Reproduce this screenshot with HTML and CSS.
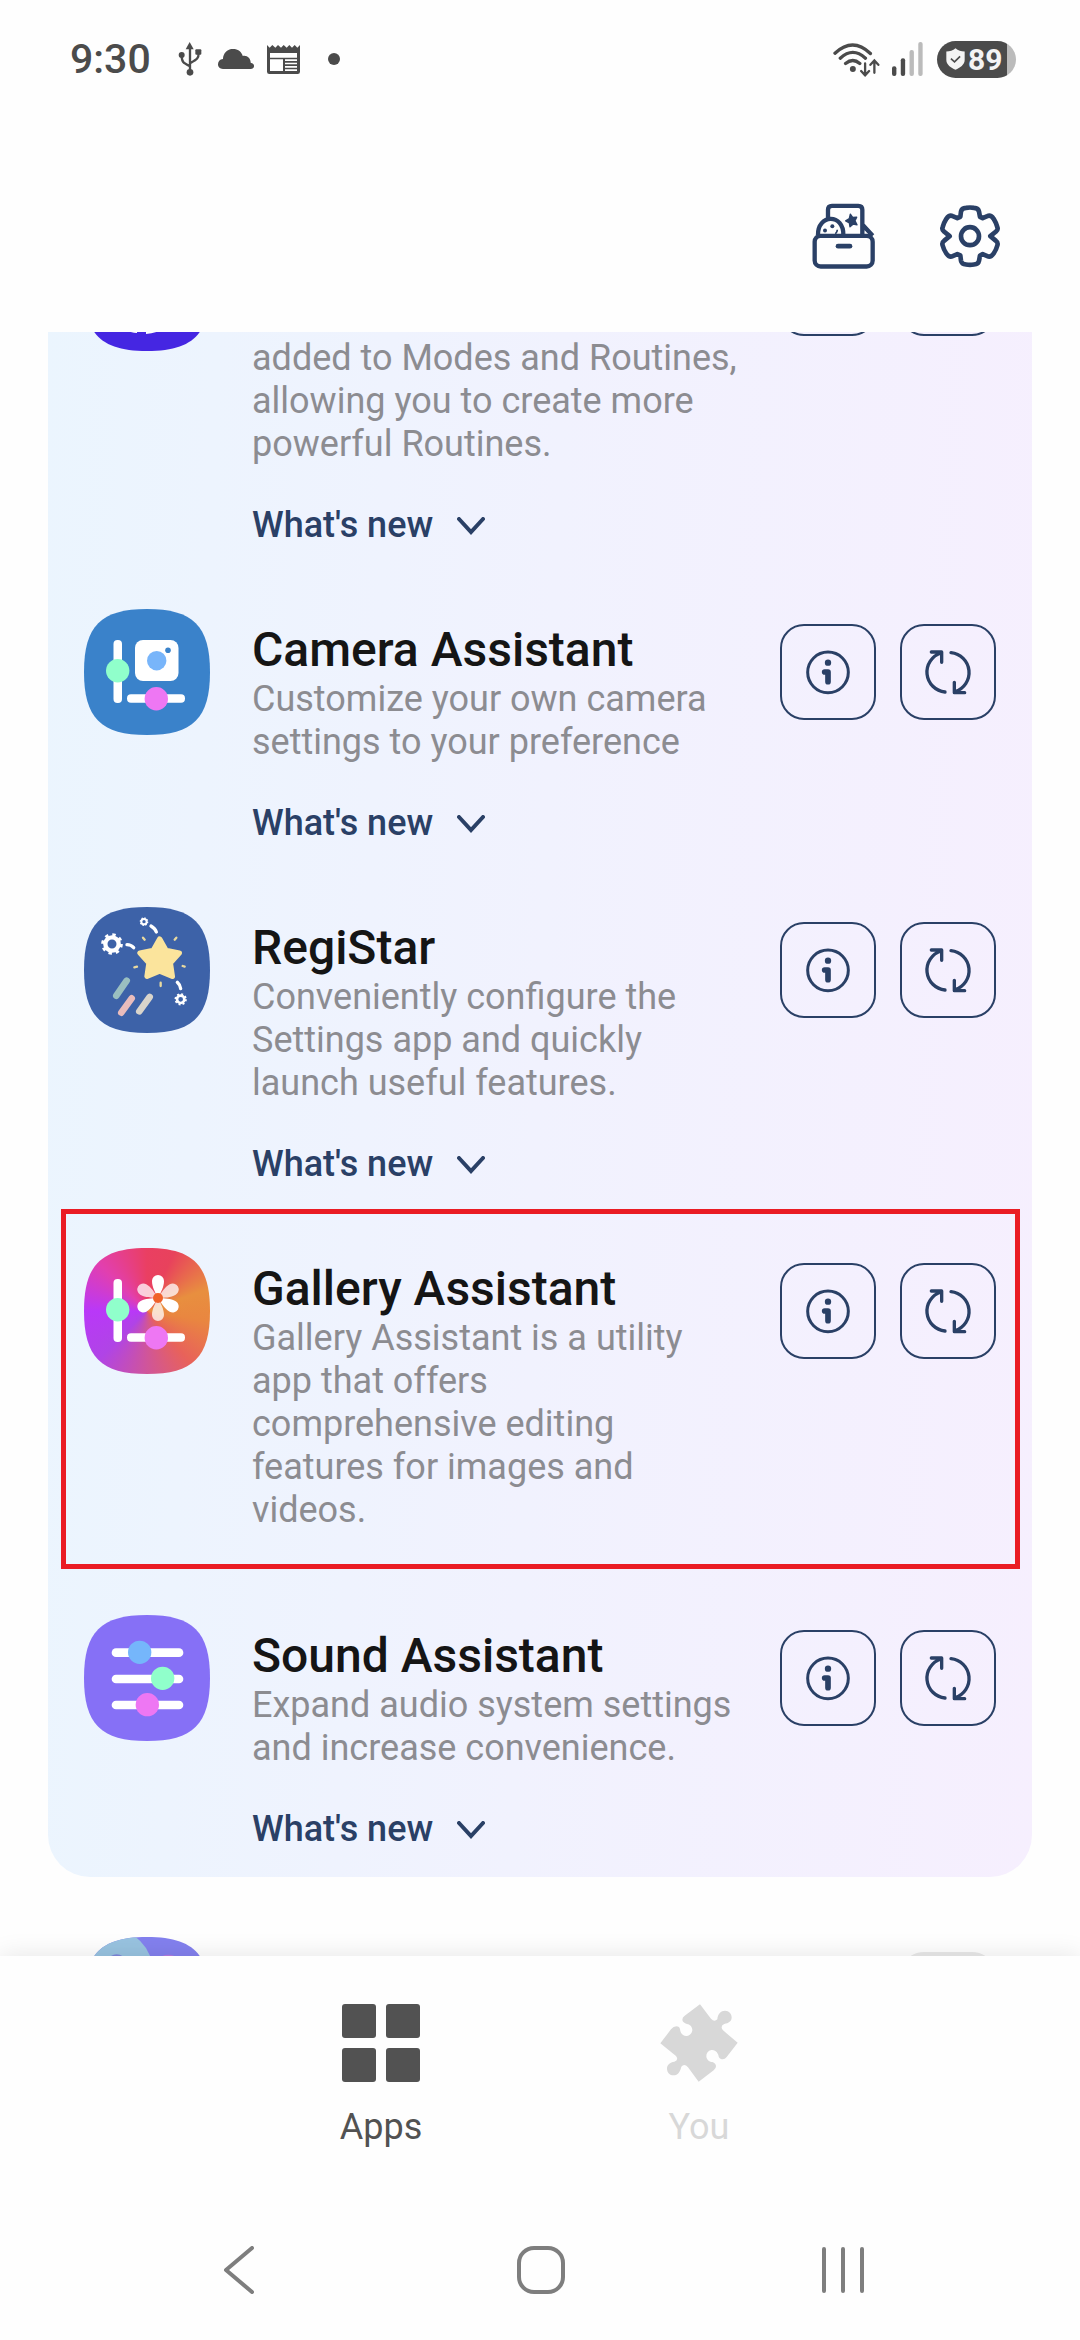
FILE: index.html
```html
<!DOCTYPE html>
<html lang="en">
<head>
<meta charset="utf-8">
<meta name="viewport" content="width=device-width, initial-scale=1">
<title>Good Lock</title>
<link rel="stylesheet" href="styles.css">
</head>
<body>
<svg class="defs" aria-hidden="true">
  <symbol id="info" viewBox="126 107 276 276">
    <circle cx="264" cy="246" r="61" fill="none" stroke="currentColor" stroke-width="9"/>
    <circle cx="264" cy="217" r="9.500" fill="currentColor"/>
    <path d="M254 245h10v29" fill="none" stroke="currentColor" stroke-width="17" stroke-linecap="round" stroke-linejoin="round"/>
  </symbol>
  <symbol id="update" viewBox="486 107 276 276">
    <g fill="none" stroke="currentColor" stroke-width="10" stroke-linecap="round" stroke-linejoin="round">
      <path d="M615 305A60 60 0 0 1 603 188M574 185h31v31"/>
      <path d="M633 187A60 60 0 0 1 645 304M674 307h-31v-31"/>
    </g>
  </symbol>
  <symbol id="chevron" viewBox="0 0 28 18">
    <path d="M2 2l12 13L26 2" fill="none" stroke="currentColor" stroke-width="4" stroke-linecap="round"/>
  </symbol>
  <symbol id="sliders" viewBox="0 0 126 126">
    <rect x="29.500" y="31" width="8.500" height="63" rx="4" fill="#fff"/>
    <circle cx="33.700" cy="61.700" r="11.700" fill="#90ffcb"/>
    <rect x="43" y="85.300" width="58" height="8.500" rx="4" fill="#fff"/>
    <circle cx="72.300" cy="89.700" r="11.700" fill="#ee77f3"/>
  </symbol>
</svg>

<header class="status">
  <div class="status-left">
    <span class="clock">9:30</span>
    <svg class="usb" viewBox="412 68 72 102" fill="#4b4b4b" aria-label="USB">
      <path d="M447 68l12 22h-24z"/><circle cx="423" cy="107" r="9"/><rect x="464" y="90" width="18" height="16" rx="3"/><circle cx="448" cy="159" r="10"/>
      <path d="M448 88v70M423 107c0 22 5 24 24 33M474 100c0 18-5 20-26 32" fill="none" stroke="#4b4b4b" stroke-width="7"/>
    </svg>
    <svg class="cloud" viewBox="534 84 109 60" fill="#4b4b4b" aria-label="Cloud">
      <path d="M549 144c-20 0-20-28 0-30 2-38 51-40 60-9 13-3 24 7 24 20 14 2 13 19 0 19z"/>
    </svg>
    <svg class="news" viewBox="681 75 99 87" aria-label="News">
      <path d="M681 75l8 8 8-8 9 8 8-8 9 8 8-8 9 8 8-8 8 8 8-8 8 8 8-8v80q0 7-7 7h-85q-7 0-7-7z" fill="#4b4b4b"/>
      <path d="M690 99h81v14h-81zM690 118h39v35h-39zM735 118h36v5h-36zM735 128h36v5h-36zM735 138h36v5h-36zM735 148h36v5h-36z" fill="#fff"/>
    </svg>
    <span class="dot"></span>
  </div>
  <div class="status-right">
    <svg class="wifi" viewBox="100 63 142 104" fill="none" stroke="#4b4b4b" stroke-linecap="round" aria-label="Wi-Fi">
      <path d="M106 96Q160 46 213 97M122 111Q160 76 198 111M138 127Q160 109 181 127" stroke-width="10"/>
      <circle cx="160" cy="144" r="9" fill="#4b4b4b" stroke="none"/>
      <path d="M197 127v36M185 150l12 13 12-13M225 155v-36M213 131l12-13 12 13" stroke-width="7"/>
    </svg>
    <svg class="signal" viewBox="275 65 92 101" aria-label="Signal">
      <rect x="275" y="137" width="13" height="29" rx="6" fill="#4b4b4b"/><rect x="301" y="113" width="13" height="53" rx="6" fill="#4b4b4b"/>
      <rect x="327" y="89" width="13" height="77" rx="6" fill="#bbb"/><rect x="353" y="65" width="13" height="101" rx="6" fill="#bbb"/>
    </svg>
    <span class="battery">
      <svg class="shield" viewBox="436 82 58 66" aria-hidden="true"><path d="M465 82c8 7 17 10 28 10v26c0 14-14 24-28 30-14-6-28-16-28-30V92c11 0 20-3 28-10z" fill="#f4f4f4"/><path d="M451 114l11 10 17-17" fill="none" stroke="#4b4b4b" stroke-width="5"/></svg>
      <span>89</span>
    </span>
  </div>
</header>

<div class="toolbar">
  <button class="tool" aria-label="My items">
    <svg viewBox="95 68 192 200" fill="none" stroke="#2a4066" stroke-width="13" stroke-linejoin="round">
      <path d="M143 112V88q0-12 12-12h79q12 0 12 12v78M113 164c-2-64 78-66 76 0M246 132l31 34"/>
      <rect x="103" y="166" width="174" height="92" rx="18"/>
      <path d="M173 197h36" stroke-linecap="round" stroke-width="14"/>
      <circle cx="134" cy="150" r="6" fill="#2a4066" stroke="none"/><circle cx="156" cy="137" r="6" fill="#2a4066" stroke="none"/>
      <path d="M165 160q6-5 6-12" stroke-width="5"/>
      <path d="M210 101l7 10 12-1-5 11 6 12-12-2-9 8-2-12-11-6 11-7z" fill="#2a4066" stroke-width="4"/>
    </svg>
  </button>
  <button class="tool" aria-label="Settings">
    <svg viewBox="472 70 192 200" fill="none" stroke="#2a4066" stroke-width="14" stroke-linejoin="round">
      <path d="M539 111L541 95Q543 85 556 84Q568 82 580 84Q593 85 595 95L598 111L606 115L620 109Q630 104 639 117Q647 130 650 142Q653 150 646 155L629 169L646 183Q653 188 650 197Q647 209 639 221Q630 234 620 229L606 223L598 227L595 243Q593 253 580 254Q568 256 556 254Q543 253 541 243L539 227L530 223L516 229Q506 234 497 221Q489 209 486 197Q483 188 490 183L507 169L490 155Q483 150 486 142Q489 130 497 117Q506 104 516 109L530 115Z"/>
      <circle cx="568" cy="169" r="27" stroke-width="14"/>
    </svg>
  </button>
</div>

<main class="feed">
  <section class="card card-scrolled">
    <article class="app app-scrolled">
      <svg class="icon" viewBox="0 0 126 126" aria-hidden="true"><path d="M63 0C109 0 126 17 126 63S109 126 63 126 0 109 0 63 17 0 63 0Z" fill="#4526e2"/><path d="M44 106q5 2 9 2v-2M62 103v6q9-1 16-4z" fill="#fff"/></svg>
      <div class="body">
        <p>added to Modes and Routines, allowing you to create more powerful Routines.</p>
        <button class="news-toggle">What's new <svg><use href="#chevron"/></svg></button>
      </div>
      <div class="actions"><button class="square" aria-label="Info"></button><button class="square" aria-label="Update"></button></div>
    </article>

    <article class="app">
      <svg class="icon" viewBox="0 0 126 126" aria-hidden="true">
        <path d="M63 0C109 0 126 17 126 63S109 126 63 126 0 109 0 63 17 0 63 0Z" fill="#3a82ca"/>
        <rect x="51" y="31" width="43.500" height="41" rx="8" fill="#fff"/><circle cx="72.700" cy="51.700" r="9.700" fill="#78b5fa"/><circle cx="84" cy="41.300" r="2.800" fill="#3a82ca"/>
        <use href="#sliders"/>
      </svg>
      <div class="body">
        <h2>Camera Assistant</h2>
        <p>Customize your own camera settings to your preference</p>
        <button class="news-toggle">What's new <svg><use href="#chevron"/></svg></button>
      </div>
      <div class="actions"><button class="square" aria-label="Info"><svg><use href="#info"/></svg></button><button class="square" aria-label="Update"><svg><use href="#update"/></svg></button></div>
    </article>

    <article class="app">
      <svg class="icon" viewBox="72 51 378 378" aria-hidden="true">
        <path d="M261 51C399 51 450 102 450 240S399 429 261 429 72 378 72 240 123 51 261 51Z" fill="#3d62a8"/>
        <path d="M299 147L318 181 358 189 331 219 337 259 299 243 261 259 267 219 240 189 280 181Z" fill="#fbe49c" stroke="#fbe49c" stroke-width="16" stroke-linejoin="round"/>
        <g fill="none" stroke="#fff">
          <circle cx="156" cy="162" r="20" stroke-width="13"/><circle cx="156" cy="162" r="28" stroke-width="9" stroke-dasharray="10 12"/>
          <circle cx="252" cy="95" r="8" stroke-width="6"/><circle cx="252" cy="95" r="11" stroke-width="4" stroke-dasharray="4 4.600"/>
          <circle cx="362" cy="328" r="11" stroke-width="8"/><circle cx="362" cy="328" r="16" stroke-width="5" stroke-dasharray="6 6.500"/>
          <path d="M201 164q12 0 20 9M273 108q12 7 16 18M352 277q9 8 10 19" stroke-width="10" stroke-linecap="round"/>
        </g>
        <g fill="none" stroke="#e8d99f" stroke-width="7" stroke-linecap="round"><path d="M249 143l5 6M349 143l-5 6M223 232l8-2M368 228l6 2M302 278v10"/></g>
        <g fill="none" stroke-width="20" stroke-linecap="round"><path d="M200 272l-31 45" stroke="#9abfc0"/><path d="M215 325l-31 43" stroke="#e9bcbc"/><path d="M269 321l-31 43" stroke="#d9d4cb"/></g>
      </svg>
      <div class="body">
        <h2>RegiStar</h2>
        <p>Conveniently configure the Settings app and quickly launch useful features.</p>
        <button class="news-toggle">What's new <svg><use href="#chevron"/></svg></button>
      </div>
      <div class="actions"><button class="square" aria-label="Info"><svg><use href="#info"/></svg></button><button class="square" aria-label="Update"><svg><use href="#update"/></svg></button></div>
    </article>

    <article class="app app-highlighted">
      <svg class="icon icon-gallery" viewBox="0 0 126 126" aria-hidden="true">
        <g transform="translate(74 50)" fill="#fff">
          <path id="petal" d="M0 0C-3-6-6-11-6-17a6 6 0 0 1 12 0C6-11 3-6 0 0Z"/>
          <use href="#petal" transform="rotate(120)"/><use href="#petal" transform="rotate(240)"/>
          <g opacity=".75"><use href="#petal" transform="rotate(60)"/><use href="#petal" transform="rotate(180)"/><use href="#petal" transform="rotate(300)"/></g>
          <circle r="5" fill="#f0622a"/>
        </g>
        <use href="#sliders"/>
      </svg>
      <div class="body">
        <h2>Gallery Assistant</h2>
        <p>Gallery Assistant is a utility app that offers comprehensive editing features for images and videos.</p>
      </div>
      <div class="actions"><button class="square" aria-label="Info"><svg><use href="#info"/></svg></button><button class="square" aria-label="Update"><svg><use href="#update"/></svg></button></div>
    </article>

    <article class="app">
      <svg class="icon" viewBox="72 75 378 378" aria-hidden="true">
        <path d="M261 75C399 75 450 126 450 264S399 453 261 453 72 402 72 264 123 75 261 75Z" fill="#8670f6"/>
        <g fill="#fff"><rect x="155" y="175" width="215" height="26" rx="13"/><rect x="155" y="254" width="215" height="26" rx="13"/><rect x="155" y="332" width="215" height="26" rx="13"/></g>
        <circle cx="239" cy="187" r="35" fill="#75b6fb"/><circle cx="308" cy="265" r="35" fill="#90ffcb"/><circle cx="262" cy="344" r="35" fill="#ee77f3"/>
      </svg>
      <div class="body">
        <h2>Sound Assistant</h2>
        <p>Expand audio system settings and increase convenience.</p>
        <button class="news-toggle">What's new <svg><use href="#chevron"/></svg></button>
      </div>
      <div class="actions"><button class="square" aria-label="Info"><svg><use href="#info"/></svg></button><button class="square" aria-label="Update"><svg><use href="#update"/></svg></button></div>
    </article>
  </section>

  <section class="card card-plain">
    <article class="app">
      <svg class="icon" viewBox="252 291 378 378" aria-hidden="true">
        <clipPath id="round"><path d="M441 291C579 291 630 342 630 480S579 669 441 669 252 618 252 480 303 291 441 291Z"/></clipPath>
        <g clip-path="url(#round)"><path d="M252 291h378v378H252z" fill="#8380ee"/><circle cx="330" cy="395" r="129" fill="#98c3e0"/><circle cx="350" cy="374" r="31" fill="#7d86da"/><circle cx="505" cy="385" r="41" fill="#b57be0"/></g>
      </svg>
      <div class="body"></div>
      <div class="actions"><button class="square square-muted" aria-label="Install"></button></div>
    </article>
  </section>
</main>

<nav class="tabs">
  <a class="tab tab-active" href="#apps">
    <svg viewBox="0 0 78 78" fill="currentColor" aria-hidden="true"><rect width="34" height="34" rx="3"/><rect x="44" width="34" height="34" rx="3"/><rect y="44" width="34" height="34" rx="3"/><rect x="44" y="44" width="34" height="34" rx="3"/></svg>
    <span>Apps</span>
  </a>
  <a class="tab" href="#you">
    <svg viewBox="1079 132 234 234" fill="currentColor" aria-hidden="true"><path d="M1199 133L1232 176Q1242 187 1251 178C1252 162 1262 152 1274 152C1286 152 1294 161 1294 172C1294 184 1285 190 1272 192Q1258 198 1268 211L1312 248L1279 291Q1272 300 1262 297C1254 294 1256 290 1253 283C1249 272 1239 269 1233 270C1223 272 1218 280 1218 288C1218 298 1226 306 1236 306Q1247 310 1247 319Q1247 326 1240 331L1195 365L1163 322Q1152 309 1143 320C1139 336 1133 346 1120 346C1108 346 1100 337 1100 326C1100 314 1109 307 1122 305Q1136 300 1127 288L1080 250L1112 208Q1119 199 1129 199C1138 200 1139 206 1140 213C1143 223 1150 228 1158 228C1168 228 1176 219 1176 210C1176 200 1168 193 1160 192Q1147 188 1146 179Q1146 172 1153 167Z"/></svg>
    <span>You</span>
  </a>
</nav>

<footer class="system">
  <button aria-label="Back"><svg viewBox="0 0 48 48"><path d="M37 2L11 24l26 22"/></svg></button>
  <button aria-label="Home"><svg viewBox="0 0 48 48"><rect x="2" y="2" width="44" height="44" rx="15"/></svg></button>
  <button aria-label="Recents"><svg viewBox="0 0 48 48"><path d="M5 3v42M24 3v42M43 3v42"/></svg></button>
</footer>
</body>
</html>
```
FILE: styles.css
```css
* { box-sizing: border-box; }

body {
  margin: 0;
  height: 100vh;
  display: flex;
  flex-direction: column;
  background: #fefefe;
  color: #151515;
  font-family: Roboto, "Noto Sans", sans-serif;
  font-size: 36px;
  line-height: 43px;
}

h2, p { margin: 0; }
button { margin: 0; padding: 0; border: 0; background: none; font: inherit; color: inherit; }
svg { display: block; flex: none; }
.defs { position: absolute; width: 0; height: 0; }

/* Status bar */
.status { display: flex; justify-content: space-between; align-items: center; height: 118px; padding: 0 64px 0 70px; color: #4b4b4b; }
.status-left, .status-right { display: flex; align-items: center; }
.clock { font-size: 41px; font-weight: 500; margin-right: 27px; }
.usb { width: 24px; height: 34px; margin-right: 16px; }
.cloud { width: 36px; height: 20px; margin-right: 13px; }
.news { width: 33px; height: 29px; margin-right: 28px; }
.dot { width: 12px; height: 12px; border-radius: 50%; background: #4b4b4b; }
.wifi { width: 47px; height: 35px; margin-right: 12px; }
.signal { width: 31px; height: 34px; margin-right: 14px; }
.battery { display: flex; align-items: center; gap: 3px; width: 79px; height: 37px; padding-left: 9px; border-radius: 19px; background: linear-gradient(90deg, #4b4b4b 70px, #bbb 70px); color: #f4f4f4; font-size: 30px; font-weight: 700; line-height: 37px; }
.shield { width: 19px; height: 22px; }

/* Toolbar */
.toolbar { display: flex; justify-content: flex-end; gap: 62px; height: 214px; padding: 85px 78px 0 0; }
.tool { width: 64px; height: 67px; }
.tool svg { width: 64px; height: 67px; }

/* App list */
.feed { flex: 1; min-height: 0; overflow: hidden; padding: 0 48px; background: #fefefe; }
.card { border-radius: 42px; background: linear-gradient(92deg, #ebf5fe 0%, #f1f2fe 50%, #f6effe 100%); }
.card-scrolled { margin-top: -143px; }
.card-plain { margin-top: 24px; background: none; }
.app { position: relative; display: flex; align-items: flex-start; padding: 36px 36px 26px; }
.icon { width: 126px; height: 126px; margin-right: 42px; }
.icon-gallery {
  background: conic-gradient(from 0deg, #ea3f62, #e8425c 25deg, #e88f3f 70deg, #e98640 100deg, #e8625a 140deg, #d0559a 180deg, #b044e6 225deg, #b938f8 270deg, #e23fae 315deg, #ea3f62);
  clip-path: path("M63 0C109 0 126 17 126 63S109 126 63 126 0 109 0 63 17 0 63 0Z");
}
.body { flex: 1; min-width: 0; padding-top: 13px; }
.app-scrolled .body { padding-top: 112px; }
.body h2 { font-size: 48px; font-weight: 500; line-height: 56px; }
.body p { margin-bottom: 21px; padding-right: 5px; color: #8c8c91; }
.news-toggle { display: flex; align-items: center; gap: 24px; padding-top: 17px; color: #2a4066; font-weight: 500; }
.news-toggle svg { width: 28px; height: 18px; }
.actions { display: flex; gap: 24px; margin: 15px 0 0 36px; }
.square { width: 96px; height: 96px; border: 2px solid #2a4066; border-radius: 24px; color: #2a4066; }
.square svg { width: 92px; height: 92px; }
.square-muted { border-color: #e9e9e9; background: #e9e9e9; }
.app-highlighted::after { content: ""; position: absolute; inset: -3px 12px 10px 13px; border: 5px solid #ea1c24; }

/* Bottom tabs */
.tabs { position: relative; display: flex; justify-content: center; height: 250px; padding-top: 48px; background: #fefefe; box-shadow: 0 0 24px rgba(0, 0, 0, .1); }
.tab { display: flex; flex-direction: column; align-items: center; gap: 24px; width: 318px; color: #d8d8d8; text-decoration: none; }
.tab svg { width: 78px; height: 78px; }
.tab-active { color: #525252; }

/* System navigation */
.system { position: relative; display: grid; grid-template-columns: repeat(3, 1fr); height: 134px; padding: 0 86px 0 88px; background: #fefefe; }
.system button { display: flex; justify-content: center; padding-top: 40px; }
.system svg { width: 48px; height: 48px; fill: none; stroke: #7e7e7e; stroke-width: 4; stroke-linecap: round; stroke-linejoin: round; }
```
